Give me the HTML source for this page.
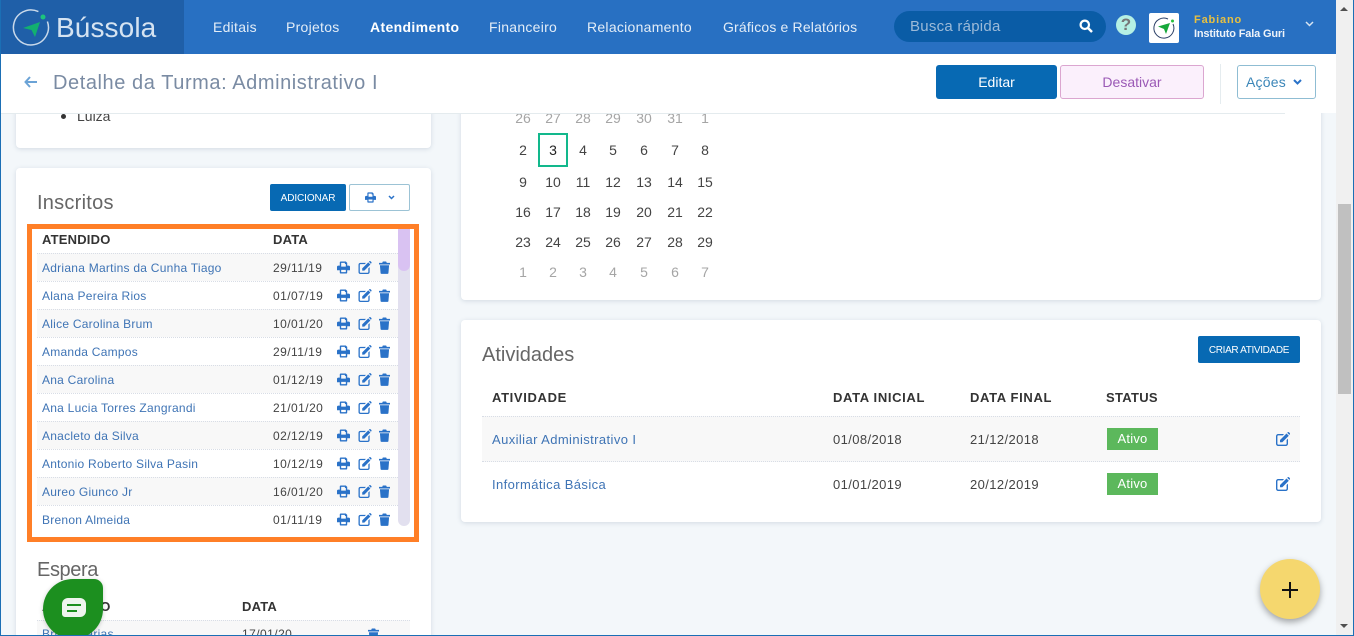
<!DOCTYPE html>
<html lang="pt-BR"><head><meta charset="utf-8"><title>Detalhe da Turma</title>
<style>
html,body{margin:0;padding:0;width:1354px;height:636px;overflow:hidden}
#w{position:relative;width:1354px;height:636px;overflow:hidden;background:#f3f7fa;font-family:"Liberation Sans",sans-serif;color:#444}
.a,.t{position:absolute}
.t{white-space:nowrap;line-height:20px}
.card{position:absolute;background:#fff;border-radius:4px;box-shadow:0 1px 5px rgba(60,90,120,.18)}
.nav{font-size:14px;color:#e3edf7;top:17px;letter-spacing:.27px}
.h{font-weight:bold;font-size:13px;color:#333;letter-spacing:.2px}
.hw{letter-spacing:.65px}
.h2{font-size:20px;color:#666;letter-spacing:.25px}
.n{font-size:12px;color:#3f74b5;letter-spacing:.25px;left:42px}
.d{font-size:12px;color:#444;letter-spacing:.45px;left:273px}
.c{font-size:14px;color:#444;width:30px;text-align:center}
.o{color:#a5a5a5}
.row{position:absolute;left:37px;width:361px;height:27px;border-top:1px dotted #d8dde6}
.g{background:#f8f8f8}
.btn{position:absolute;box-sizing:border-box;border-radius:3px;text-align:center}
svg{position:absolute;display:block}
</style></head><body><div id="w">
<svg width="0" height="0" style="position:absolute"><defs>
<symbol id="pr" viewBox="0 0 14 14"><path fill="#2a72c8" fill-rule="evenodd" d="M3 1.500a1 1 0 0 1 1-1h5.500L11 2v3h1.500A1.500 1.500 0 0 1 14 6.500V10h-3v2.500a1 1 0 0 1-1 1H4a1 1 0 0 1-1-1V10H0V6.500A1.500 1.500 0 0 1 1.500 5H3zM4.500 2V6h5V3.200H8.500V2zM4.500 9.500v2.500h5V9.500z"/></symbol>
<symbol id="ed" viewBox="0 0 14 14"><path fill="#2a72c8" d="M2.200 2H8L6.800 3.400H2.200a.8.8 0 0 0-.8.800v7.600a.8.8 0 0 0 .8.800h7.600a.8.8 0 0 0 .8-.8V8L12 6.600v5.200A2.200 2.200 0 0 1 9.800 14H2.200A2.200 2.200 0 0 1 0 11.800V4.200A2.200 2.200 0 0 1 2.200 2z"/><path fill="#2a72c8" d="M4 8 10.500 1.500l2.300 2.300L6.300 10.300H4zM11.200.8l.5-.5a1 1 0 0 1 1.300 0l.8.800a1 1 0 0 1 0 1.300l-.5.500z"/></symbol>
<symbol id="tr" viewBox="0 0 12 14"><path fill="#2a72c8" d="M0 2h3.500L4.200.5h3.600L8.500 2H12v1.700H0zM1 4.500h10l-.7 8.300a1.200 1.200 0 0 1-1.200 1.200H2.900a1.200 1.200 0 0 1-1.200-1.200z"/></symbol>
</defs></svg>

<!-- left cards -->
<div class="card" style="left:16px;top:90px;width:415px;height:58px"></div>
<div class="a" style="left:61px;top:114px;width:5px;height:5px;border-radius:50%;background:#333"></div>
<div class="t" style="left:77px;top:106px;font-size:14px;color:#444">Luiza</div>

<div class="card" style="left:16px;top:168px;width:415px;height:480px"></div>
<div class="t h2" style="left:37px;top:193px">Inscritos</div>
<div class="btn" style="left:270px;top:184px;width:76px;height:27px;background:#0769b3;color:#fff;font-size:10px;line-height:29px;letter-spacing:-.1px;border-radius:2px">ADICIONAR</div>
<div class="btn" style="left:349px;top:184px;width:61px;height:27px;background:#fff;border:1px solid #9cc3d5;border-radius:2px"></div>
<svg style="left:365px;top:192px" width="11" height="11"><use href="#pr"/></svg>
<svg style="left:388px;top:195px" width="7" height="5" viewBox="0 0 7 5"><path d="M1 1l2.500 2.500L6 1" fill="none" stroke="#2a72c8" stroke-width="1.500"/></svg>

<!-- enrolled table -->
<div class="a" style="left:27px;top:224px;width:382px;height:308px;border:5px solid #ff7f27"></div>
<div class="t h" style="left:42px;top:230px">ATENDIDO</div>
<div class="t h" style="left:273px;top:230px">DATA</div>
<div class="a" style="left:398px;top:229px;width:12px;height:297px;background:#e2e0ef;border-radius:0 0 6px 6px"></div>
<div class="a" style="left:398px;top:229px;width:12px;height:42px;background:#d9c2f2;border-radius:0 0 6px 6px"></div>

<div class="row g" style="top:253px"></div><div class="t n" style="top:258px">Adriana Martins da Cunha Tiago</div><div class="t d" style="top:258px">29/11/19</div>
<svg style="left:337px;top:261px" width="13" height="13"><use href="#pr"/></svg><svg style="left:358px;top:261px" width="14" height="13"><use href="#ed"/></svg><svg style="left:379px;top:261px" width="11" height="13"><use href="#tr"/></svg>
<div class="row" style="top:281px"></div><div class="t n" style="top:286px">Alana Pereira Rios</div><div class="t d" style="top:286px">01/07/19</div>
<svg style="left:337px;top:289px" width="13" height="13"><use href="#pr"/></svg><svg style="left:358px;top:289px" width="14" height="13"><use href="#ed"/></svg><svg style="left:379px;top:289px" width="11" height="13"><use href="#tr"/></svg>
<div class="row g" style="top:309px"></div><div class="t n" style="top:314px">Alice Carolina Brum</div><div class="t d" style="top:314px">10/01/20</div>
<svg style="left:337px;top:317px" width="13" height="13"><use href="#pr"/></svg><svg style="left:358px;top:317px" width="14" height="13"><use href="#ed"/></svg><svg style="left:379px;top:317px" width="11" height="13"><use href="#tr"/></svg>
<div class="row" style="top:337px"></div><div class="t n" style="top:342px">Amanda Campos</div><div class="t d" style="top:342px">29/11/19</div>
<svg style="left:337px;top:345px" width="13" height="13"><use href="#pr"/></svg><svg style="left:358px;top:345px" width="14" height="13"><use href="#ed"/></svg><svg style="left:379px;top:345px" width="11" height="13"><use href="#tr"/></svg>
<div class="row g" style="top:365px"></div><div class="t n" style="top:370px">Ana Carolina</div><div class="t d" style="top:370px">01/12/19</div>
<svg style="left:337px;top:373px" width="13" height="13"><use href="#pr"/></svg><svg style="left:358px;top:373px" width="14" height="13"><use href="#ed"/></svg><svg style="left:379px;top:373px" width="11" height="13"><use href="#tr"/></svg>
<div class="row" style="top:393px"></div><div class="t n" style="top:398px">Ana Lucia Torres Zangrandi</div><div class="t d" style="top:398px">21/01/20</div>
<svg style="left:337px;top:401px" width="13" height="13"><use href="#pr"/></svg><svg style="left:358px;top:401px" width="14" height="13"><use href="#ed"/></svg><svg style="left:379px;top:401px" width="11" height="13"><use href="#tr"/></svg>
<div class="row g" style="top:421px"></div><div class="t n" style="top:426px">Anacleto da Silva</div><div class="t d" style="top:426px">02/12/19</div>
<svg style="left:337px;top:429px" width="13" height="13"><use href="#pr"/></svg><svg style="left:358px;top:429px" width="14" height="13"><use href="#ed"/></svg><svg style="left:379px;top:429px" width="11" height="13"><use href="#tr"/></svg>
<div class="row" style="top:449px"></div><div class="t n" style="top:454px">Antonio Roberto Silva Pasin</div><div class="t d" style="top:454px">10/12/19</div>
<svg style="left:337px;top:457px" width="13" height="13"><use href="#pr"/></svg><svg style="left:358px;top:457px" width="14" height="13"><use href="#ed"/></svg><svg style="left:379px;top:457px" width="11" height="13"><use href="#tr"/></svg>
<div class="row g" style="top:477px"></div><div class="t n" style="top:482px">Aureo Giunco Jr</div><div class="t d" style="top:482px">16/01/20</div>
<svg style="left:337px;top:485px" width="13" height="13"><use href="#pr"/></svg><svg style="left:358px;top:485px" width="14" height="13"><use href="#ed"/></svg><svg style="left:379px;top:485px" width="11" height="13"><use href="#tr"/></svg>
<div class="row" style="top:505px"></div><div class="t n" style="top:510px">Brenon Almeida</div><div class="t d" style="top:510px">01/11/19</div>
<svg style="left:337px;top:513px" width="13" height="13"><use href="#pr"/></svg><svg style="left:358px;top:513px" width="14" height="13"><use href="#ed"/></svg><svg style="left:379px;top:513px" width="11" height="13"><use href="#tr"/></svg>

<!-- waiting list -->
<div class="t h2" style="left:37px;top:560px;letter-spacing:-.4px">Espera</div>
<div class="t h" style="left:42px;top:597px">ATENDIDO</div>
<div class="t h" style="left:242px;top:597px">DATA</div>
<div class="a g" style="left:37px;top:620px;width:373px;height:16px;border-top:1px dotted #d8dde6;box-sizing:border-box"></div>
<div class="t n" style="top:624px">Bruno Farias</div>
<div class="t d" style="top:624px;left:242px">17/01/20</div>
<svg style="left:368px;top:628px" width="11" height="13"><use href="#tr"/></svg>

<!-- calendar card -->
<div class="card" style="left:461px;top:90px;width:860px;height:210px"></div>
<div class="t c o" style="left:508px;top:108px">26</div><div class="t c o" style="left:538px;top:108px">27</div><div class="t c o" style="left:568px;top:108px">28</div><div class="t c o" style="left:598px;top:108px">29</div><div class="t c o" style="left:629px;top:108px">30</div><div class="t c o" style="left:660px;top:108px">31</div><div class="t c o" style="left:690px;top:108px">1</div>
<div class="a" style="left:538px;top:133px;width:26px;height:30px;border:2px solid #12b88c"></div>
<div class="t c" style="left:508px;top:140px">2</div><div class="t c" style="left:538px;top:140px;color:#222">3</div><div class="t c" style="left:568px;top:140px">4</div><div class="t c" style="left:598px;top:140px">5</div><div class="t c" style="left:629px;top:140px">6</div><div class="t c" style="left:660px;top:140px">7</div><div class="t c" style="left:690px;top:140px">8</div>
<div class="t c" style="left:508px;top:172px">9</div><div class="t c" style="left:538px;top:172px">10</div><div class="t c" style="left:568px;top:172px">11</div><div class="t c" style="left:598px;top:172px">12</div><div class="t c" style="left:629px;top:172px">13</div><div class="t c" style="left:660px;top:172px">14</div><div class="t c" style="left:690px;top:172px">15</div>
<div class="t c" style="left:508px;top:202px">16</div><div class="t c" style="left:538px;top:202px">17</div><div class="t c" style="left:568px;top:202px">18</div><div class="t c" style="left:598px;top:202px">19</div><div class="t c" style="left:629px;top:202px">20</div><div class="t c" style="left:660px;top:202px">21</div><div class="t c" style="left:690px;top:202px">22</div>
<div class="t c" style="left:508px;top:232px">23</div><div class="t c" style="left:538px;top:232px">24</div><div class="t c" style="left:568px;top:232px">25</div><div class="t c" style="left:598px;top:232px">26</div><div class="t c" style="left:629px;top:232px">27</div><div class="t c" style="left:660px;top:232px">28</div><div class="t c" style="left:690px;top:232px">29</div>
<div class="t c o" style="left:508px;top:262px">1</div><div class="t c o" style="left:538px;top:262px">2</div><div class="t c o" style="left:568px;top:262px">3</div><div class="t c o" style="left:598px;top:262px">4</div><div class="t c o" style="left:629px;top:262px">5</div><div class="t c o" style="left:660px;top:262px">6</div><div class="t c o" style="left:690px;top:262px">7</div>

<!-- activities card -->
<div class="card" style="left:461px;top:320px;width:860px;height:202px"></div>
<div class="t h2" style="left:482px;top:345px;letter-spacing:0">Atividades</div>
<div class="btn" style="left:1198px;top:336px;width:102px;height:27px;background:#0769b3;color:#fff;font-size:10px;line-height:29px;letter-spacing:-.35px;border-radius:2px">CRIAR ATIVIDADE</div>
<div class="t h hw" style="left:492px;top:388px">ATIVIDADE</div>
<div class="t h hw" style="left:833px;top:388px">DATA INICIAL</div>
<div class="t h hw" style="left:970px;top:388px">DATA FINAL</div>
<div class="t h" style="left:1106px;top:388px;letter-spacing:.3px">STATUS</div>
<div class="a g" style="left:482px;top:416px;width:818px;height:46px;border-top:1px dotted #d8dde6;border-bottom:1px dotted #d8dde6;box-sizing:border-box"></div>
<div class="t" style="left:492px;top:430px;font-size:13px;color:#3f74b5;letter-spacing:.4px">Auxiliar Administrativo I</div>
<div class="t" style="left:833px;top:430px;font-size:13px;letter-spacing:.4px">01/08/2018</div>
<div class="t" style="left:970px;top:430px;font-size:13px;letter-spacing:.4px">21/12/2018</div>
<div class="a" style="left:1107px;top:428px;width:51px;height:22px;background:#5cb85c;color:#fff;font-size:13px;line-height:21px;text-align:center;letter-spacing:.2px">Ativo</div>
<svg style="left:1276px;top:432px" width="14" height="14"><use href="#ed"/></svg>
<div class="t" style="left:492px;top:475px;font-size:13px;color:#3f74b5;letter-spacing:.4px">Informática Básica</div>
<div class="t" style="left:833px;top:475px;font-size:13px;letter-spacing:.4px">01/01/2019</div>
<div class="t" style="left:970px;top:475px;font-size:13px;letter-spacing:.4px">20/12/2019</div>
<div class="a" style="left:1107px;top:473px;width:51px;height:22px;background:#5cb85c;color:#fff;font-size:13px;line-height:21px;text-align:center;letter-spacing:.2px">Ativo</div>
<svg style="left:1276px;top:477px" width="14" height="14"><use href="#ed"/></svg>

<!-- sub header -->
<div class="a" style="left:0;top:54px;width:1336px;height:59px;background:#fff"></div>
<div class="a" style="left:0;top:113px;width:1285px;height:1px;background:#e4ebee"></div>
<svg style="left:24px;top:76px" width="13" height="12" viewBox="0 0 13 12"><path d="M6 1 1.500 6 6 11M2 6h11" fill="none" stroke="#6ba3d6" stroke-width="2"/></svg>
<div class="t" style="left:53px;top:73px;font-size:20px;color:#7a8ba3;letter-spacing:.57px">Detalhe da Turma: Administrativo I</div>
<div class="btn" style="left:936px;top:65px;width:121px;height:34px;background:#0769b3;color:#fff;font-size:14px;line-height:34px">Editar</div>
<div class="btn" style="left:1060px;top:65px;width:144px;height:34px;background:#fbf0fc;border:1px solid #dba6d0;color:#9b59b6;font-size:14px;line-height:32px">Desativar</div>
<div class="a" style="left:1220px;top:64px;width:1px;height:40px;background:#e5ecef"></div>
<div class="btn" style="left:1237px;top:65px;width:79px;height:34px;background:#fff;border:1px solid #8fbdd3"></div>
<div class="t" style="left:1246px;top:72px;font-size:14px;color:#3b86b8;letter-spacing:.2px">Ações</div>
<svg style="left:1293px;top:79px" width="9" height="6" viewBox="0 0 9 6"><path d="M1 1l3.500 3.500L8 1" fill="none" stroke="#2a72c8" stroke-width="2"/></svg>

<!-- top nav -->
<div class="a" style="left:0;top:0;width:1336px;height:54px;background:#2870c2"></div>
<div class="a" style="left:1px;top:0;width:183px;height:54px;background:#1f5fa8"></div>
<svg style="left:12px;top:9px" width="38" height="38" viewBox="0 0 38 38"><path d="M35.400 12.500A17.500 17.500 0 1 1 26.400 2.600" fill="none" stroke="#c9d9ea" stroke-width="1.500"/><circle cx="31" cy="8" r="2.500" fill="#1cc47c"/><path d="M11 19 28 13 23 28l-3.500-7z" fill="#12b070"/></svg>
<div class="t" style="left:56px;top:13px;font-size:28px;line-height:30px;color:#d5e3f1;letter-spacing:.1px">Bússola</div>
<div class="t nav" style="left:213px">Editais</div>
<div class="t nav" style="left:286px">Projetos</div>
<div class="t nav" style="left:370px;font-weight:bold;color:#fff;letter-spacing:.35px">Atendimento</div>
<div class="t nav" style="left:489px">Financeiro</div>
<div class="t nav" style="left:587px">Relacionamento</div>
<div class="t nav" style="left:723px;letter-spacing:.17px">Gráficos e Relatórios</div>
<div class="a" style="left:894px;top:11px;width:212px;height:31px;border-radius:16px;background:#0a5ca6"></div>
<div class="t" style="left:910px;top:17px;font-size:15px;color:#9cbad8;letter-spacing:.25px">Busca rápida</div>
<svg style="left:1079px;top:19px" width="14" height="14" viewBox="0 0 14 14"><circle cx="5.800" cy="5.800" r="4.200" fill="none" stroke="#fff" stroke-width="2.200"/><path d="M9 9l4 4" stroke="#fff" stroke-width="2.500"/></svg>
<div class="a" style="left:1116px;top:15px;width:20px;height:20px;border-radius:50%;background:#b5f0e4;color:#777;font-weight:bold;font-size:17px;line-height:20px;text-align:center">?</div>
<div class="a" style="left:1149px;top:13px;width:30px;height:30px;border-radius:2px;background:#fff"></div>
<svg style="left:1152px;top:16px" width="24" height="24" viewBox="0 0 24 24"><path d="M21 8A10 10 0 1 1 16 3" fill="none" stroke="#2b3f66" stroke-width="1"/><circle cx="20.500" cy="5" r="1.500" fill="#2ac03c"/><path d="M6 10.500 18 7l-4 11-2-5z" fill="#16a83a"/></svg>
<div class="t" style="left:1194px;top:10px;font-size:11px;font-weight:bold;color:#e8c040;letter-spacing:.85px">Fabiano</div>
<div class="t" style="left:1194px;top:24px;font-size:11px;font-weight:bold;color:#eef3f9;letter-spacing:-.17px">Instituto Fala Guri</div>
<svg style="left:1305px;top:21px" width="9" height="6" viewBox="0 0 9 6"><path d="M1 1l3.500 3.500L8 1" fill="none" stroke="#d8e5f2" stroke-width="1.500"/></svg>

<!-- chat -->
<div class="a" style="left:43px;top:579px;width:60px;height:60px;background:#1c8f1f;border-radius:50% 15% 50% 50%;box-shadow:0 1px 5px rgba(0,0,0,.2)"></div>
<div class="a" style="left:62px;top:598px;width:24px;height:19px;background:#eef5ee;border-radius:6px 6px 6px 3px"></div>
<div class="a" style="left:67px;top:604px;width:14px;height:2px;background:#1c8f1f"></div>
<div class="a" style="left:67px;top:610px;width:10px;height:2px;background:#1c8f1f"></div>

<!-- fab -->
<div class="a" style="left:1260px;top:559px;width:60px;height:60px;border-radius:50%;background:#f5d76e;box-shadow:0 3px 7px rgba(0,0,0,.35)"></div>
<div class="a" style="left:1282px;top:589px;width:16px;height:2px;background:#111"></div>
<div class="a" style="left:1289px;top:582px;width:2px;height:16px;background:#111"></div>

<!-- browser scrollbar -->
<div class="a" style="left:1336px;top:0;width:17px;height:636px;background:#f0f0f0"></div>
<div class="a" style="left:1338px;top:204px;width:13px;height:190px;background:#c0c0c0"></div>
<div class="a" style="left:1340px;top:7px;border:4px solid transparent;border-top:0;border-bottom:4px solid #505050"></div>
<div class="a" style="left:1340px;top:624px;border:4px solid transparent;border-bottom:0;border-top:4px solid #505050"></div>

<!-- window edge -->
<div class="a" style="left:0;top:0;width:1px;height:636px;background:#1b6fb5"></div>
<div class="a" style="left:1353px;top:0;width:1px;height:636px;background:#1b6fb5"></div>
<div class="a" style="left:0;top:635px;width:1354px;height:1px;background:#1b6fb5"></div>
</div></body></html>
